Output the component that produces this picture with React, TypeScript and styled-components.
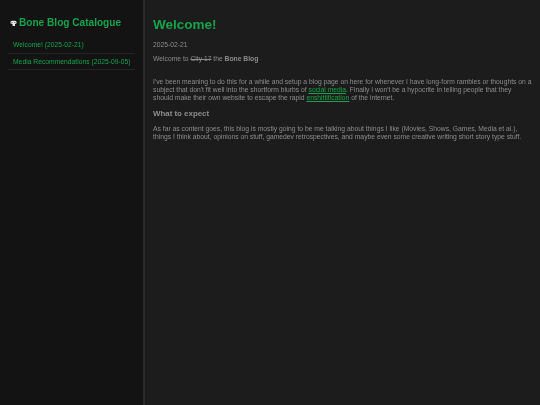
import { createGlobalStyle } from 'styled-components'
import styled from 'styled-components'

const GlobalStyle = createGlobalStyle`
  html, body {
    margin: 0;
    padding: 0;
    background: #1c1c1c;
  }
`

const Page = styled.div`
  display: flex;
  width: 540px;
  height: 405px;
  overflow: hidden;
  font-family: 'Liberation Sans', Arial, sans-serif;
  color: #8c8c8c;
  will-change: transform;
`

const Sidebar = styled.aside`
  width: 145px;
  flex-shrink: 0;
  box-sizing: border-box;
  padding: 16px 8px 0 8px;
  background: #131313;
  border-right: 2px solid #2b2b2b;
`

const Brand = styled.h1`
  display: flex;
  align-items: center;
  gap: 2px;
  margin: 0 0 7px 2px;
  font-size: 10.1px;
  line-height: 14px;
  font-weight: 700;
  color: #16a34a;
`

const NavList = styled.ul`
  list-style: none;
  margin: 0;
  padding: 0;
`

const NavItem = styled.li`
  padding: 4px 5px 3.6px;
  font-size: 6.75px;
  line-height: 8px;
  white-space: nowrap;
  color: #16a34a;
  border-bottom: 1px solid #242424;
`

const Main = styled.main`
  flex: 1;
  box-sizing: border-box;
  padding: 17px 8.5px 0 8px;
`

const Title = styled.h2`
  margin: 0 0 9px;
  font-size: 13.5px;
  line-height: 15px;
  font-weight: 700;
  color: #16a34a;
`

const Text = styled.p<{ $gap: number }>`
  margin: 0 0 ${(p) => p.$gap}px;
  font-size: 6.75px;
  line-height: 8px;
`

const Strong = styled.strong`
  font-weight: 700;
`

const Strike = styled.s`
  text-decoration: line-through;
`

const GreenLink = styled.a`
  color: #16a34a;
  text-decoration: underline;
`

const Subtitle = styled.h3`
  margin: 0 0 6px;
  font-size: 7.9px;
  line-height: 10px;
  font-weight: 700;
`

function BoneIcon() {
  return (
    <svg width="7" height="7" viewBox="0 0 7 7">
      <path d="M0.5 1.5 L2 0.8 H5 L6.5 1.5 V3.5 L5 4 V6 H2.5 V4 L0.5 3.5 Z" fill="#e8e8e8" />
      <rect x="1.5" y="2" width="1" height="1" fill="#555" />
      <rect x="4.3" y="2" width="1" height="1" fill="#555" />
    </svg>
  )
}

export default function App() {
  return (
    <>
      <GlobalStyle />
      <Page>
        <Sidebar>
          <Brand>
            <BoneIcon />
            Bone Blog Catalogue
          </Brand>
          <NavList>
            <NavItem>Welcome! (2025-02-21)</NavItem>
            <NavItem>Media Recommendations (2025-09-05)</NavItem>
          </NavList>
        </Sidebar>
        <Main>
          <Title>Welcome!</Title>
          <Text $gap={6}>2025-02-21</Text>
          <Text $gap={15}>
            Welcome to <Strike>City 17</Strike> the <Strong>Bone Blog</Strong>
          </Text>
          <Text $gap={7}>
            I've been meaning to do this for a while and setup a blog page on here for whenever I have
            long-form rambles or thoughts on a subject that don't fit well into the shortform blurbs of{' '}
            <GreenLink>social media</GreenLink>. Finally I won't be a hypocrite in telling people that
            they should make their own website to escape the rapid <GreenLink>enshittification</GreenLink>{' '}
            of the internet.
          </Text>
          <Subtitle>What to expect</Subtitle>
          <Text $gap={0}>
            As far as content goes, this blog is mostly going to be me talking about things I like (Movies,
            Shows, Games, Media et al.), things I think about, opinions on stuff, gamedev retrospectives,
            and maybe even some creative writing short story type stuff.
          </Text>
        </Main>
      </Page>
    </>
  )
}
